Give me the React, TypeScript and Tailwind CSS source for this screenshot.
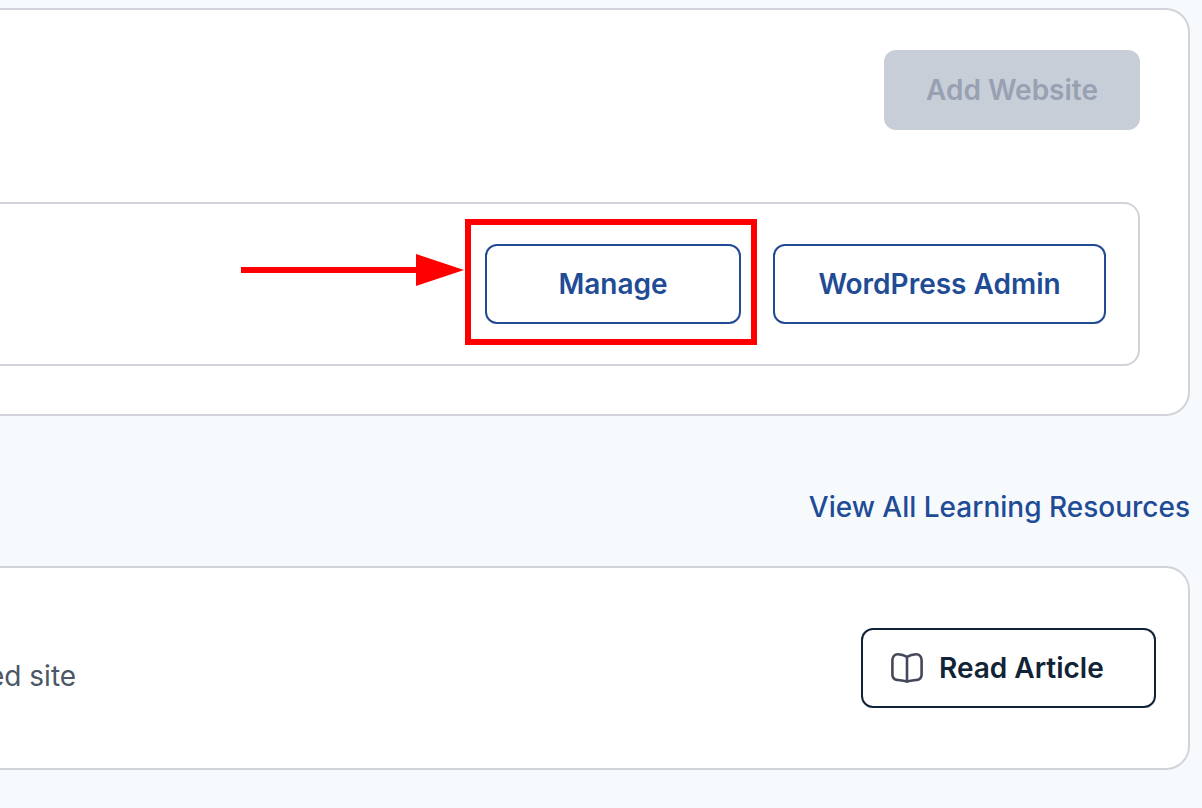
import type { ButtonHTMLAttributes } from "react";

type Tone = "primary" | "dark" | "muted";

const tones: Record<Tone, string> = {
  primary: "border-[#214b95] text-[#214b95] bg-white",
  dark: "border-[#112337] text-[#112337] bg-white",
  muted: "border-[#c8ced7] bg-[#c8ced7] text-[#98a1b2]",
};

function Button({
  tone,
  className = "justify-center",
  ...rest
}: ButtonHTMLAttributes<HTMLButtonElement> & { tone: Tone }) {
  return (
    <button
      type="button"
      className={`flex h-20 items-center rounded-xl border-2 text-[28px] leading-10 font-semibold whitespace-nowrap ${tones[tone]} ${className}`}
      {...rest}
    />
  );
}

function BookIcon() {
  return (
    <svg
      viewBox="1 0 32 32"
      className="size-8 shrink-0"
      fill="none"
      stroke="#44485a"
      strokeWidth="2.6"
      strokeLinecap="round"
      strokeLinejoin="round"
      aria-hidden="true"
    >
      <path d="M17 4.9 C14.6 3.6 11 2.5 8 2.3 C4.7 2.1 2.4 4.6 2.4 8 V22.4 C2.4 25.8 3.8 27.3 7 27.9 C10.3 28.4 13.8 28.9 17 29.6 C20.2 28.9 23.7 28.4 27 27.9 C30.2 27.3 31.6 25.8 31.6 22.4 V8 C31.6 4.6 29.3 2.1 26 2.3 C23 2.5 19.4 3.6 17 4.9 Z" />
      <path d="M17 5 V29.4" />
    </svg>
  );
}

function ManageCallout() {
  return (
    <>
      <div className="pointer-events-none absolute -top-[25px] -right-4 -bottom-[21px] -left-5 border-[6px] border-[#ff0000]" />
      <svg
        viewBox="0 0 223 32"
        className="pointer-events-none absolute top-[10px] right-full mr-[21px] h-8 w-[223px]"
        fill="#ff0000"
        aria-hidden="true"
      >
        <path d="M0 13 H175 V0 L223 16 L175 32 V19 H0 Z" />
      </svg>
    </>
  );
}

export default function App() {
  return (
    <main className="min-h-screen overflow-hidden bg-[#f6fafd] pt-2 pr-3 font-['Inter',sans-serif]">
      <section className="flex flex-col gap-[72px] rounded-r-3xl border-2 border-l-0 border-[#d0d3da] bg-white pt-10 pr-12 pb-12">
        <div className="flex justify-end">
          <Button tone="muted" className="min-w-64 justify-center" disabled>
            Add Website
          </Button>
        </div>
        <div className="flex justify-end gap-8 rounded-r-2xl border-2 border-l-0 border-[#d0d3da] py-10 pr-8">
          <div className="relative">
            <Button tone="primary" className="min-w-64 justify-center">
              Manage
            </Button>
            <ManageCallout />
          </div>
          <Button tone="primary" className="min-w-[333px] justify-center">
            WordPress Admin
          </Button>
        </div>
      </section>

      <div className="flex justify-end pt-[71px] pb-[39px]">
        <a href="#learning" className="text-[28px] leading-10 font-medium text-[#214b95]">
          View All Learning Resources
        </a>
      </div>

      <section
        id="learning"
        className="flex items-center justify-between rounded-r-3xl border-2 border-l-0 border-[#d0d3da] bg-white py-[60px] pr-8"
      >
        <p className="-ml-3 pt-4 text-[28px] leading-10 text-[#4b5666]">ed site</p>
        <Button tone="dark" className="min-w-[295px] gap-4 px-7">
          <BookIcon />
          Read Article
        </Button>
      </section>
    </main>
  );
}
